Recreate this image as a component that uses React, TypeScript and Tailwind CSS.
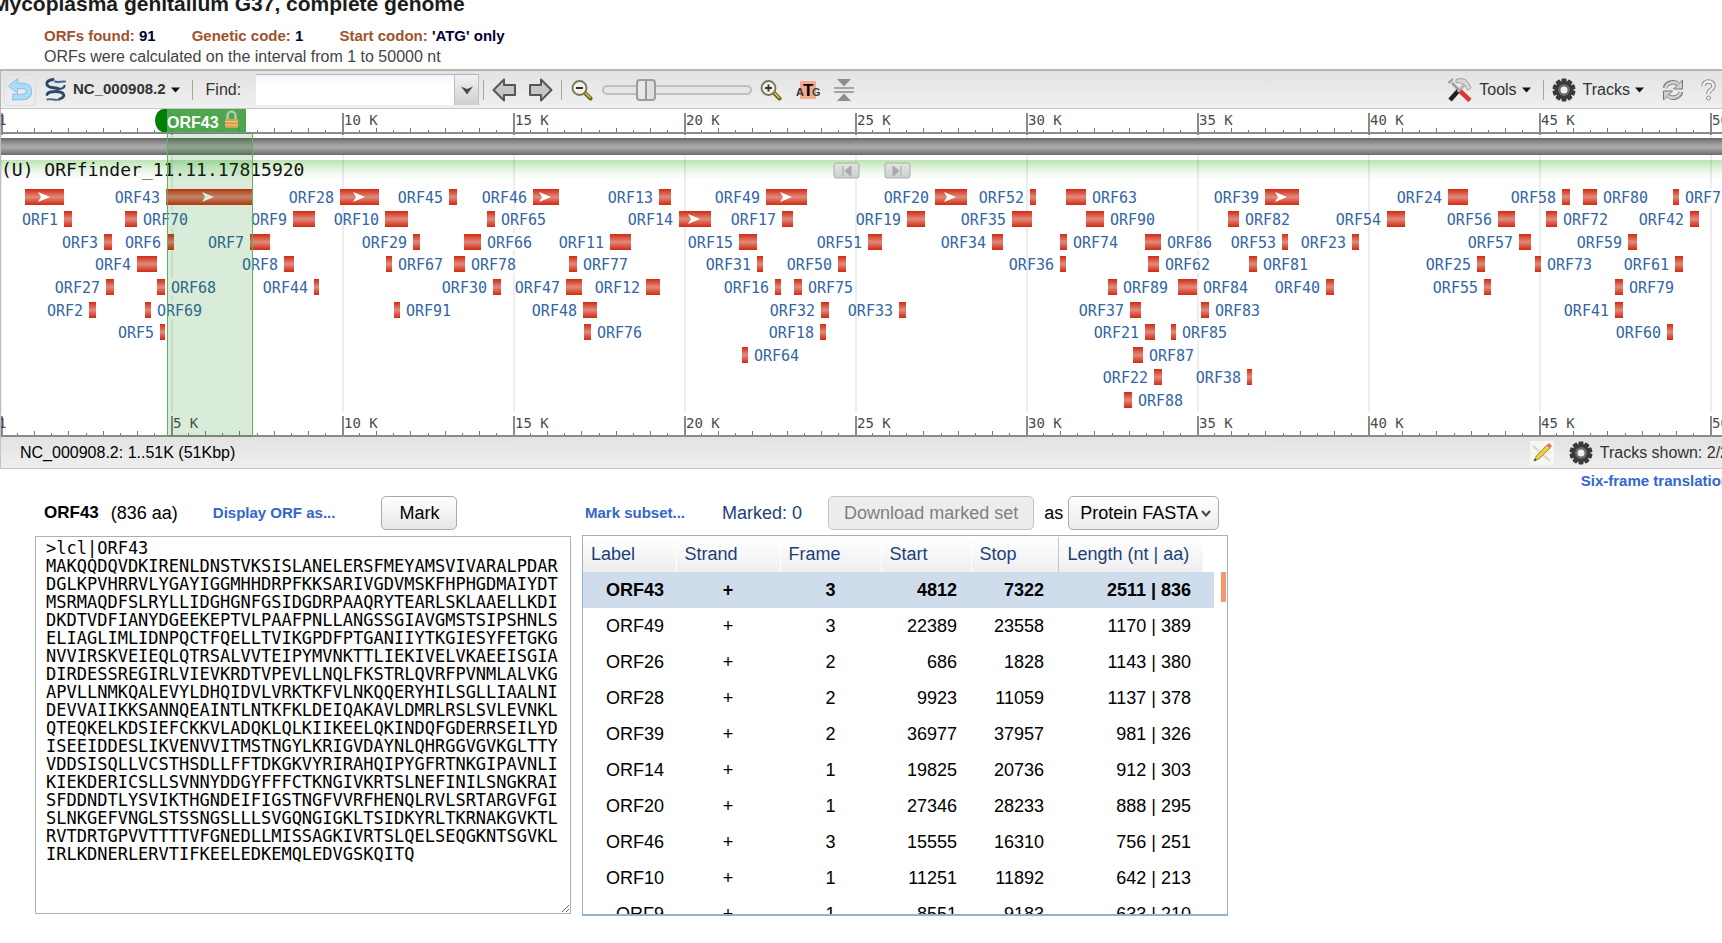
import React from "react";

type Orf = { x: number; w: number; label?: string; right?: boolean; arrow?: boolean };

const L = (label: string, x: number, w: number, arrow = false): Orf => ({ label, x, w, arrow });
const R = (label: string, x: number, w: number): Orf => ({ label, x, w, right: true });

const LANES: { y: number; orfs: Orf[] }[] = [
  {
    y: 88,
    orfs: [
      { x: 25, w: 39, arrow: true },
      L("ORF43", 166, 86, true), L("ORF28", 340, 39, true), L("ORF45", 449, 8), L("ORF46", 533, 26, true),
      L("ORF13", 659, 12), L("ORF49", 766, 41, true), L("ORF20", 935, 32, true), L("ORF52", 1030, 6),
      R("ORF63", 1066, 20), L("ORF39", 1265, 34, true), L("ORF24", 1448, 20), L("ORF58", 1562, 8),
      R("ORF80", 1583, 14), R("ORF71", 1673, 6),
    ],
  },
  {
    y: 110,
    orfs: [
      L("ORF1", 64, 8), R("ORF70", 125, 12), L("ORF9", 293, 22), L("ORF10", 385, 23), R("ORF65", 487, 8),
      L("ORF14", 679, 32, true), L("ORF17", 782, 11), L("ORF19", 907, 18), L("ORF35", 1012, 20),
      R("ORF90", 1086, 18), R("ORF82", 1228, 11), L("ORF54", 1387, 18), L("ORF56", 1498, 17),
      R("ORF72", 1546, 11), L("ORF42", 1690, 9),
    ],
  },
  {
    y: 133,
    orfs: [
      L("ORF3", 104, 8), L("ORF6", 167, 7), L("ORF7", 250, 20), L("ORF29", 413, 7), R("ORF66", 464, 17),
      L("ORF11", 610, 21), L("ORF15", 739, 18), L("ORF51", 868, 14), L("ORF34", 992, 11), R("ORF74", 1060, 7),
      R("ORF86", 1145, 16), L("ORF53", 1282, 6), L("ORF23", 1352, 7), L("ORF57", 1519, 12), L("ORF59", 1628, 9),
    ],
  },
  {
    y: 155,
    orfs: [
      L("ORF4", 137, 20), L("ORF8", 284, 10), R("ORF67", 386, 6), R("ORF78", 454, 11), R("ORF77", 569, 8),
      L("ORF31", 757, 6), L("ORF50", 838, 8), L("ORF36", 1060, 6), R("ORF62", 1148, 11), R("ORF81", 1249, 8),
      L("ORF25", 1477, 8), R("ORF73", 1535, 6), L("ORF61", 1675, 8),
    ],
  },
  {
    y: 178,
    orfs: [
      L("ORF27", 106, 8), R("ORF68", 157, 8), L("ORF44", 314, 5), L("ORF30", 493, 8), L("ORF47", 566, 16),
      L("ORF12", 646, 14), L("ORF16", 775, 6), R("ORF75", 794, 8), R("ORF89", 1108, 9), R("ORF84", 1178, 19),
      L("ORF40", 1326, 8), L("ORF55", 1484, 7), R("ORF79", 1615, 8),
    ],
  },
  {
    y: 201,
    orfs: [
      L("ORF2", 89, 7), R("ORF69", 145, 6), R("ORF91", 394, 6), L("ORF48", 583, 14), L("ORF32", 821, 8),
      L("ORF33", 899, 7), L("ORF37", 1130, 11), R("ORF83", 1201, 8), L("ORF41", 1615, 8),
    ],
  },
  {
    y: 223,
    orfs: [
      L("ORF5", 160, 5), R("ORF76", 584, 7), L("ORF18", 820, 6), L("ORF21", 1145, 10), R("ORF85", 1171, 5),
      L("ORF60", 1667, 6),
    ],
  },
  { y: 246, orfs: [R("ORF64", 742, 6), R("ORF87", 1133, 10)] },
  { y: 268, orfs: [L("ORF22", 1154, 8), L("ORF38", 1247, 5)] },
  { y: 291, orfs: [R("ORF88", 1124, 8)] },
];

const SEQUENCE = [
  ">lcl|ORF43",
  "MAKQQDQVDKIRENLDNSTVKSISLANELERSFMEYAMSVIVARALPDAR",
  "DGLKPVHRRVLYGAYIGGMHHDRPFKKSARIVGDVMSKFHPHGDMAIYDT",
  "MSRMAQDFSLRYLLIDGHGNFGSIDGDRPAAQRYTEARLSKLAAELLKDI",
  "DKDTVDFIANYDGEEKEPTVLPAAFPNLLANGSSGIAVGMSTSIPSHNLS",
  "ELIAGLIMLIDNPQCTFQELLTVIKGPDFPTGANIIYTKGIESYFETGKG",
  "NVVIRSKVEIEQLQTRSALVVTEIPYMVNKTTLIEKIVELVKAEEISGIA",
  "DIRDESSREGIRLVIEVKRDTVPEVLLNQLFKSTRLQVRFPVNMLALVKG",
  "APVLLNMKQALEVYLDHQIDVLVRKTKFVLNKQQERYHILSGLLIAALNI",
  "DEVVAIIKKSANNQEAINTLNTKFKLDEIQAKAVLDMRLRSLSVLEVNKL",
  "QTEQKELKDSIEFCKKVLADQKLQLKIIKEELQKINDQFGDERRSEILYD",
  "ISEEIDDESLIKVENVVITMSTNGYLKRIGVDAYNLQHRGGVGVKGLTTY",
  "VDDSISQLLVCSTHSDLLFFTDKGKVYRIRAHQIPYGFRTNKGIPAVNLI",
  "KIEKDERICSLLSVNNYDDGYFFFCTKNGIVKRTSLNEFINILSNGKRAI",
  "SFDDNDTLYSVIKTHGNDEIFIGSTNGFVVRFHENQLRVLSRTARGVFGI",
  "SLNKGEFVNGLSTSSNGSLLLSVGQNGIGKLTSIDKYRLTKRNAKGVKTL",
  "RVTDRTGPVVTTTTVFGNEDLLMISSAGKIVRTSLQELSEQGKNTSGVKL",
  "IRLKDNERLERVTIFKEELEDKEMQLEDVGSKQITQ",
].join("\n");

const ROWS: string[][] = [
  ["ORF43", "+", "3", "4812", "7322", "2511 | 836"],
  ["ORF49", "+", "3", "22389", "23558", "1170 | 389"],
  ["ORF26", "+", "2", "686", "1828", "1143 | 380"],
  ["ORF28", "+", "2", "9923", "11059", "1137 | 378"],
  ["ORF39", "+", "2", "36977", "37957", "981 | 326"],
  ["ORF14", "+", "1", "19825", "20736", "912 | 303"],
  ["ORF20", "+", "1", "27346", "28233", "888 | 295"],
  ["ORF46", "+", "3", "15555", "16310", "756 | 251"],
  ["ORF10", "+", "1", "11251", "11892", "642 | 213"],
  ["ORF9", "+", "1", "8551", "9183", "633 | 210"],
];

const kb = (k: number) => Math.round(k * 34.2);

function Ruler({ y }: { y: number }) {
  const ticks = [];
  for (let i = 0; i <= 101; i++) {
    const k = i / 2;
    const major = i % 10 === 0;
    const h = major ? 22 : i % 2 === 0 ? 4 : 2;
    ticks.push(
      <rect key={i} x={kb(k) + (i === 0 ? 1 : 0)} y={major ? y - 19 : y - h} width={major ? 2 : 1} height={h} fill={major ? "#8a8a8a" : "#777"} />,
    );
  }
  return (
    <g>
      <rect x="1" y={y} width="1800" height="2" fill="#8a8a8a" />
      {ticks}
      <g className="font-['DejaVu_Sans_Mono',monospace] text-[14px]" fill="#4a4a4a">
        <text x="-2" y={y - 7}>1</text>
        {[5, 10, 15, 20, 25, 30, 35, 40, 45, 50].map((k) => (
          <text key={k} x={kb(k) + 2} y={y - 7}>{k} K</text>
        ))}
      </g>
    </g>
  );
}

function Arrow({ cx, cy }: { cx: number; cy: number }) {
  return <path d={`M${cx - 6} ${cy - 5} L${cx + 6} ${cy} L${cx - 6} ${cy + 5} L${cx - 3} ${cy} Z`} fill="#fff" />;
}

function GenomeMap() {
  return (
    <svg className="block w-full h-[328px] overflow-hidden bg-white" role="img" aria-label="Open reading frames on NC_000908.2">
      <defs>
        <linearGradient id="orf" x1="0" y1="0" x2="0" y2="1">
          <stop offset="0" stopColor="#d02a10" />
          <stop offset="0.5" stopColor="#e4897c" />
          <stop offset="1" stopColor="#d02a10" />
        </linearGradient>
        <linearGradient id="band" x1="0" y1="0" x2="0" y2="1">
          <stop offset="0" stopColor="#6a6a6a" />
          <stop offset="0.45" stopColor="#a8a8a8" />
          <stop offset="0.6" stopColor="#a8a8a8" />
          <stop offset="1" stopColor="#6a6a6a" />
        </linearGradient>
        <linearGradient id="track" x1="0" y1="0" x2="0" y2="1">
          <stop offset="0" stopColor="#bde3b3" />
          <stop offset="0.5" stopColor="#e6f5e2" />
          <stop offset="1" stopColor="#ffffff" />
        </linearGradient>
        <linearGradient id="nav" x1="0" y1="0" x2="0" y2="1">
          <stop offset="0" stopColor="#dfe6dd" />
          <stop offset="1" stopColor="#cfcfcf" />
        </linearGradient>
      </defs>
      <Ruler y={23} />
      <rect x="1" y="51" width="1800" height="19" fill="url(#track)" />
      {[0, 5, 10, 15, 20, 25, 30, 35, 40, 45, 50].map((k) => (
        <rect key={k} x={kb(k)} y="27" width="2" height="276" fill="#000" fillOpacity="0.07" />
      ))}
      <rect x="1" y="29" width="1800" height="17" fill="url(#band)" />
      <text x="1" y="67" className="font-['DejaVu_Sans_Mono',monospace] text-[18px]" fill="#111">(U) ORFfinder_11.11.17815920</text>
      {[834, 885].map((x, i) => (
        <g key={x}>
          <rect x={x} y="54" width="25" height="15" rx="2" fill="url(#nav)" stroke="#a9ada8" />
          {i === 0 ? (
            <path d={`M${x + 9} 57v10M${x + 17} 57l-6 5l6 5z`} fill="#a9a9a9" stroke="#a9a9a9" />
          ) : (
            <path d={`M${x + 16} 57v10M${x + 8} 57l6 5l-6 5z`} fill="#a9a9a9" stroke="#a9a9a9" />
          )}
        </g>
      ))}
      {LANES.map((lane) =>
        lane.orfs.map((o) => (
          <g key={`${lane.y}-${o.x}`}>
            {o.label && o.right && <rect x={o.x + o.w + 6} y={lane.y - 9} width="46" height="18" fill="#fff" />}
            <rect x={o.x} y={lane.y - 8} width={o.w} height="16" fill="url(#orf)" />
            {o.arrow && <Arrow cx={o.x + Math.round(o.w / 2) - 1} cy={lane.y} />}
            {o.label && (
              <text
                x={o.right ? o.x + o.w + 6 : o.x - 6}
                y={lane.y + 6}
                textAnchor={o.right ? "start" : "end"}
                fill="#3465a4"
                className="font-['DejaVu_Sans_Mono',monospace] text-[15px]"
              >
                {o.label}
              </text>
            )}
          </g>
        )),
      )}
      <Ruler y={326} />
      <rect x="167" y="24" width="86" height="304" fill="#008000" fillOpacity="0.15" />
      <path d="M167.500 24V328M252.500 24V328" stroke="#5fb35f" fill="none" />
      <path d="M167 0h-3a9 11.500 0 0 0 0 23h3z" fill="#008000" />
      <rect x="167" y="0" width="79" height="23" fill="#3fa03f" fillOpacity="0.92" />
      <text x="167" y="19" className="font-['Liberation_Sans',Arial,sans-serif] text-[16px] font-bold" fill="#fff">ORF43</text>
      <path d="M227.500 12V7a4 4.500 0 0 1 8 0v5" fill="none" stroke="#b9c4b4" strokeWidth="2.500" />
      <rect x="225" y="10" width="13" height="9" rx="1" fill="#d6a24c" />
      <path d="M225 12.500h13M225 16h13" stroke="#efc987" />
      <rect x="0" y="0" width="1" height="328" fill="#bdbdbd" />
    </svg>
  );
}

function Gear() {
  return (
    <svg width="24" height="24" viewBox="0 0 24 24" aria-hidden="true">
      {[0, 36, 72, 108, 144].map((a) => (
        <rect key={a} x="9.500" y="0.500" width="5" height="23" rx="1" fill="#3a3a3a" transform={`rotate(${a} 12 12)`} />
      ))}
      <circle cx="12" cy="12" r="9" fill="#3a3a3a" />
      <circle cx="12" cy="12" r="6" fill="#6b6b6b" />
      <circle cx="12" cy="12" r="3.500" fill="#f0f0f0" />
    </svg>
  );
}

function Magnifier({ plus = false }: { plus?: boolean }) {
  return (
    <svg width="22" height="22" viewBox="0 0 22 22" aria-hidden="true">
      <path d="M13 13l6.500 6.500" stroke="#6d6420" strokeWidth="4" strokeLinecap="round" />
      <path d="M14 13.500l5 5" stroke="#d8c93a" strokeWidth="1.500" strokeLinecap="round" />
      <circle cx="8.500" cy="9" r="7" fill="#f2f2ea" stroke="#77735a" strokeWidth="1.800" />
      <path d={plus ? "M5 9h7M8.500 5.500v7" : "M5 9h7"} stroke="#333" strokeWidth="2" />
    </svg>
  );
}

const Caret = () => (
  <svg width="9" height="6" viewBox="0 0 9 6" aria-hidden="true"><path d="M0 0.500h9L4.500 5.500z" fill="#111" /></svg>
);

const Sep = ({ className = "" }: { className?: string }) => (
  <span className={`h-5 w-px shrink-0 bg-[#aaa798] ${className}`} />
);

function BlockArrow({ flip = false }: { flip?: boolean }) {
  return (
    <svg width="25" height="24" viewBox="0 0 25 24" className={flip ? "-scale-x-100" : ""} aria-hidden="true">
      <path d="M1.500 12L12 1.500V7h11v10H12v5.500z" fill="#c6c6c6" stroke="#555" strokeWidth="2" strokeLinejoin="round" />
    </svg>
  );
}

function Toolbar() {
  return (
    <div className="flex h-10 items-center border-t-2 border-b border-l border-[#bdb4b4] border-b-[#c8c8c8] bg-linear-to-b from-[#e3e3e3] to-[#efefef] text-[16px] text-[#333]">
      <button type="button" aria-label="Undo" className="ml-[3px] flex size-8 shrink-0 items-center justify-center rounded border border-[#dadde2]">
        <svg width="24" height="24" viewBox="0 0 24 24" aria-hidden="true">
          <path d="M7 8h8.500a5.500 5.500 0 0 1 0 11H4" fill="none" stroke="#8cc0e4" strokeWidth="6.500" />
          <path d="M9.500 0.500v15L0.500 8z" fill="#a9dcf6" stroke="#8cc0e4" />
          <path d="M7 8h8.500a5.500 5.500 0 0 1 0 11H4.500" fill="none" stroke="#a9dcf6" strokeWidth="4.500" />
        </svg>
      </button>
      <button type="button" className="ml-2 flex shrink-0 items-center text-[15px] font-bold">
        <svg width="24" height="24" viewBox="0 0 24 24" aria-hidden="true" fill="none" stroke="#2c4668" strokeLinecap="round">
          <path d="M9 1.500C1 2.500 1 8.500 8 9.500L14 10.500" strokeWidth="2.800" />
          <path d="M11 3.500C15 5 17 3 21 3.500" strokeWidth="2" stroke="#4d6789" />
          <path d="M14 11C18 11 20 9.500 20.500 8" strokeWidth="2.200" />
          <path d="M3 16.500C4 13.500 8 13.500 12 13.500C20 13.500 23 18.500 15.500 21" strokeWidth="2.800" />
          <path d="M3.500 21.500C7 20 11 23 15 21.500" strokeWidth="2" stroke="#4d6789" />
        </svg>
        <span className="mx-[5px]">NC_000908.2</span>
        <Caret />
      </button>
      <Sep className="ml-3" />
      <label htmlFor="find" className="ml-[13px]">Find:</label>
      <div className="ml-[15px] flex h-[31px] shrink-0 border-t border-[#a9b4cc]">
        <input id="find" type="text" className="w-[198px] bg-linear-to-b from-[#f3f6f8] to-white to-40% outline-none" />
        <button type="button" aria-label="Search history" className="flex w-[25px] items-center justify-center border-x border-[#b9bfcc] bg-linear-to-b from-[#f2f2f2] to-[#cfcfcf]">
          <svg width="14" height="9" viewBox="0 0 14 9" aria-hidden="true"><path d="M1 0.500L7 3l6-2.500L7 8.500z" fill="#4a4a4a" /></svg>
        </button>
      </div>
      <Sep className="ml-1" />
      <button type="button" aria-label="Pan left" className="ml-2"><BlockArrow /></button>
      <button type="button" aria-label="Pan right" className="ml-[11px]"><BlockArrow flip /></button>
      <Sep className="ml-2" />
      <button type="button" aria-label="Zoom out" className="ml-[9px]"><Magnifier /></button>
      <input
        type="range"
        aria-label="Zoom level"
        defaultValue={25}
        className="ml-[9px] h-6 w-[150px] appearance-none bg-transparent [&::-webkit-slider-runnable-track]:h-[10px] [&::-webkit-slider-runnable-track]:rounded-full [&::-webkit-slider-runnable-track]:border-2 [&::-webkit-slider-runnable-track]:border-[#bfbfbf] [&::-webkit-slider-runnable-track]:bg-[#e6e6e6] [&::-webkit-slider-thumb]:-mt-2 [&::-webkit-slider-thumb]:h-[22px] [&::-webkit-slider-thumb]:w-5 [&::-webkit-slider-thumb]:appearance-none [&::-webkit-slider-thumb]:rounded [&::-webkit-slider-thumb]:border-2 [&::-webkit-slider-thumb]:border-[#9c9c9c] [&::-webkit-slider-thumb]:bg-[linear-gradient(90deg,#e8e8e8_45%,#9a9a9a_45%,#9a9a9a_55%,#e0e0e0_55%)]"
      />
      <button type="button" aria-label="Zoom in" className="ml-2"><Magnifier plus /></button>
      <button type="button" aria-label="Zoom to sequence" className="ml-[14px]">
        <svg width="24" height="22" viewBox="0 0 24 22" className="font-['Liberation_Sans',Arial,sans-serif] font-bold" aria-hidden="true">
          <rect x="4" y="2" width="16" height="18" fill="#f5a98d" />
          <text x="0" y="17" fontSize="11" fill="#333">A</text>
          <text x="7" y="17" fontSize="17" fill="#000">T</text>
          <text x="16" y="17" fontSize="11" fill="#444">G</text>
        </svg>
      </button>
      <button type="button" aria-label="Collapse tracks" className="ml-[14px]">
        <svg width="20" height="22" viewBox="0 0 20 22" aria-hidden="true">
          <path d="M3 0h14l-7 7.500zM3 22h14l-7-7.500z" fill="#8d8d8d" />
          <path d="M0 9h20M0 13h20" stroke="#8d8d8d" strokeWidth="1.500" />
        </svg>
      </button>
      <button type="button" className="ml-auto flex shrink-0 items-center">
        <svg width="24" height="24" viewBox="0 0 24 24" aria-hidden="true">
          <path d="M11 12L2 22" stroke="#222" strokeWidth="4.500" />
          <path d="M4 5l9 9" stroke="#9a9a9a" strokeWidth="2.500" />
          <path d="M0.500 5L5 1" stroke="#9a9a9a" strokeWidth="2" />
          <path d="M17 6l-7 8" stroke="#b5b5b5" strokeWidth="3" />
          <path d="M8 1.500c5-1.500 10-1 12 3l3 5l-3 3l-3-5c-2-2-5-3-9-3z" fill="#d9d9d9" stroke="#9a9a9a" />
          <path d="M12 13l10 9.500" stroke="#d43a36" strokeWidth="4.500" />
        </svg>
        <span className="mr-[5px] ml-[7px]">Tools</span>
        <Caret />
      </button>
      <Sep className="ml-3" />
      <button type="button" className="ml-2 flex shrink-0 items-center">
        <Gear />
        <span className="mr-[5px] ml-[7px]">Tracks</span>
        <Caret />
      </button>
      <button type="button" aria-label="Refresh" className="ml-[18px]">
        <svg width="22" height="22" viewBox="0 0 22 22" aria-hidden="true">
          <path d="M3 9a8 7 0 0 1 13-4" fill="none" stroke="#777" strokeWidth="4.500" />
          <path d="M20.500 1v9h-9z" fill="#cfcfcf" stroke="#777" />
          <path d="M3.500 9a8 7 0 0 1 13-4" fill="none" stroke="#cfcfcf" strokeWidth="2.800" />
          <path d="M19 13a8 7 0 0 1-13 4" fill="none" stroke="#777" strokeWidth="4.500" />
          <path d="M1.500 21v-9h9z" fill="#cfcfcf" stroke="#777" />
          <path d="M18.500 13a8 7 0 0 1-13 4" fill="none" stroke="#cfcfcf" strokeWidth="2.800" />
        </svg>
      </button>
      <button type="button" aria-label="Help" className="mr-[26px] ml-[17px]">
        <svg width="15" height="22" viewBox="0 0 15 22" aria-hidden="true">
          <path d="M2.500 7c0-6 10-6 10 0c0 4-5 3-5 8" fill="none" stroke="#909090" strokeWidth="4.500" />
          <path d="M2.500 7c0-6 10-6 10 0c0 4-5 3-5 8" fill="none" stroke="#f1f1f1" strokeWidth="2.500" />
          <circle cx="7.500" cy="19" r="2" fill="#f1f1f1" stroke="#909090" />
        </svg>
      </button>
    </div>
  );
}

function StatusBar() {
  return (
    <div className="flex h-8 items-center border-b border-l border-[#c4c4c4] bg-linear-to-b from-[#e2e2e2] to-[#efefef] pr-[13px] text-[16px] whitespace-nowrap">
      <span className="ml-[19px] text-black">NC_000908.2: 1..51K (51Kbp)</span>
      <button type="button" aria-label="Edit markers" className="ml-auto">
        <svg width="24" height="24" viewBox="0 0 24 24" aria-hidden="true">
          <rect width="24" height="24" fill="#f6f6f2" />
          <path d="M3 5l17 15M21 6L4 20" stroke="#d8d8d2" strokeWidth="2" />
          <path d="M4 20l2.500-5L17 4l3 3L9 18z" fill="#f0cd3c" stroke="#a98c2a" />
          <path d="M17 4l2-2l3 3l-2 2z" fill="#d8707a" />
          <path d="M4 20l1-2.500l1.500 1.500z" fill="#333" />
        </svg>
      </button>
      <span className="ml-[15px]"><Gear /></span>
      <span className="ml-[7px] text-[#333]">Tracks shown: 2/2</span>
    </div>
  );
}

const HEAD = "border-r border-white bg-linear-to-b from-white to-[#eeeeee] pl-2 text-left font-normal";
const BTN = "h-[34px] rounded-[5px] border border-[#a9a9a9] text-[18px]";

export default function App() {
  return (
    <div className="min-h-screen overflow-hidden bg-white font-['Liberation_Sans',Arial,sans-serif] text-black">
      <header className="pb-0.5">
        <h1 className="-mt-2 -ml-2 text-[21px] leading-6 font-bold text-[#1c1c1c]">Mycoplasma genitalium G37, complete genome</h1>
        <div className="mt-[10px] flex gap-9 pl-11 text-[15px] leading-5 font-bold text-[#a0522d]">
          <span>ORFs found: <b className="text-[#000033]">91</b></span>
          <span>Genetic code: <b className="text-[#000033]">1</b></span>
          <span>Start codon: <b className="text-[#000033]">'ATG' only</b></span>
        </div>
        <p className="mt-px pl-11 text-[16px] leading-5 text-[#444]">ORFs were calculated on the interval from 1 to 50000 nt</p>
      </header>

      <section className="-mr-5">
        <Toolbar />
        <GenomeMap />
        <StatusBar />
        <div className="flex justify-end pt-0.5 pr-3 text-[15px] leading-5">
          <a href="#six-frame" className="font-bold whitespace-nowrap text-[#3366cc]">Six-frame translation</a>
        </div>
      </section>

      <main className="flex items-start gap-[11px] pt-[5px] pl-[35px]">
        <section className="w-[536px] shrink-0">
          <div className="flex items-center pl-[9px] text-[18px]">
            <b className="text-[17px]">ORF43</b>
            <span className="ml-3">(836 aa)</span>
            <a href="#display" className="ml-[35px] text-[15px] font-bold text-[#3366cc]">Display ORF as...</a>
            <button type="button" className={`${BTN} ml-[46px] bg-linear-to-b from-white to-[#e6e6e6] px-[17px]`}>Mark</button>
          </div>
          <textarea
            aria-label="ORF43 sequence"
            readOnly
            defaultValue={SEQUENCE}
            className="mt-1.5 block h-[378px] w-full resize overflow-hidden border border-[#b0b0b0] py-0.5 pl-[10px] font-['DejaVu_Sans_Mono',monospace] text-[17px] leading-[18px] whitespace-pre text-black outline-none"
          />
        </section>

        <section className="w-[646px] shrink-0">
          <div className="flex items-center pl-[3px] text-[18px]">
            <a href="#subset" className="text-[15px] font-bold text-[#3366cc]">Mark subset...</a>
            <span className="ml-[37px] text-[#1c3f78]">Marked: 0</span>
            <button type="button" disabled className={`${BTN} ml-[26px] border-[#c4c4c4] bg-[#ededed] px-[15px] text-[#808080]`}>Download marked set</button>
            <label htmlFor="format" className="ml-[10px]">as</label>
            <span className="relative ml-[5px] inline-flex items-center">
              <select id="format" className={`${BTN} w-[151px] appearance-none bg-linear-to-b from-white to-[#ebebeb] pl-[11px]`}>
                <option>Protein FASTA</option>
              </select>
              <svg width="10" height="7" viewBox="0 0 10 7" className="pointer-events-none absolute right-2" aria-hidden="true">
                <path d="M1 1l4 4.500L9 1" fill="none" stroke="#444" strokeWidth="2" />
              </svg>
            </span>
          </div>
          <div className="relative mt-[5px] h-[381px] overflow-hidden border border-b-2 border-[#9ab0c8] pt-px">
            <table className="w-[631px] table-fixed border-collapse text-[18px]">
              <colgroup>
                <col className="w-[93px]" />
                <col className="w-[104px]" />
                <col className="w-[101px]" />
                <col className="w-[90px]" />
                <col className="w-[87px]" />
                <col className="w-[145px]" />
                <col />
              </colgroup>
              <thead>
                <tr className="h-[35px] text-[#1c3f78]">
                  <th className={HEAD}>Label</th>
                  <th className={HEAD}>Strand</th>
                  <th className={HEAD}>Frame</th>
                  <th className={HEAD}>Start</th>
                  <th className="border-r border-[#c6c6c6] bg-linear-to-b from-white to-[#eeeeee] pl-2 text-left font-normal">Stop</th>
                  <th className="bg-linear-to-b from-white to-[#eeeeee] pl-[9px] text-left font-normal whitespace-nowrap">Length (nt | aa)</th>
                  <td />
                </tr>
              </thead>
              <tbody>
                {ROWS.map((r, i) => (
                  <tr key={r[0]} className={i === 0 ? "h-9 bg-[#cfdcec] font-bold" : "h-9"}>
                    <td className="pr-3 text-right">{r[0]}</td>
                    <td className="text-center">{r[1]}</td>
                    <td className="text-center">{r[2]}</td>
                    <td className="pr-[14px] text-right">{r[3]}</td>
                    <td className="pr-[14px] text-right">{r[4]}</td>
                    <td className="pr-3 text-right whitespace-nowrap">{r[5]}</td>
                    <td />
                  </tr>
                ))}
              </tbody>
            </table>
            <span className="absolute top-9 right-px h-[30px] w-[5px] bg-[#f4976c]" />
          </div>
        </section>
      </main>
    </div>
  );
}
